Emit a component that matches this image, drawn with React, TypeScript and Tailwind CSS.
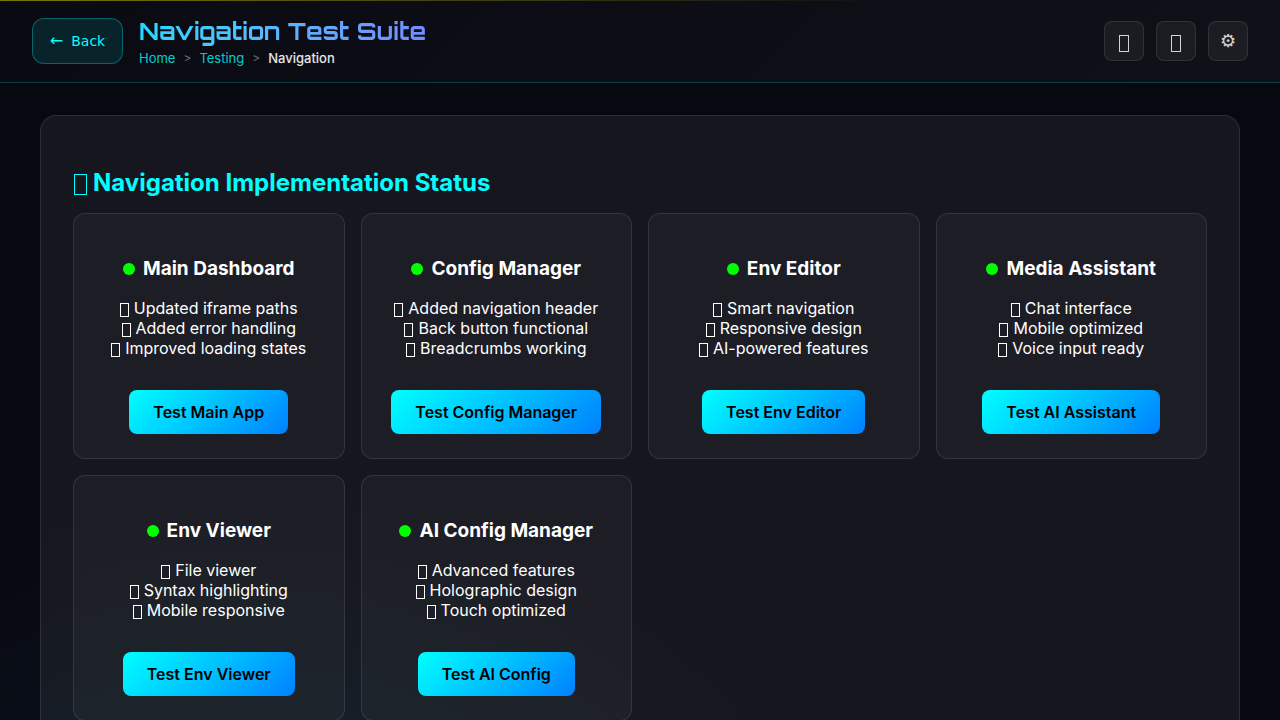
type Status = {
  title: string;
  notes: string[];
  action: string;
};

const statuses: Status[] = [
  {
    title: 'Main Dashboard',
    notes: ['Updated iframe paths', 'Added error handling', 'Improved loading states'],
    action: 'Test Main App',
  },
  {
    title: 'Config Manager',
    notes: ['Added navigation header', 'Back button functional', 'Breadcrumbs working'],
    action: 'Test Config Manager',
  },
  {
    title: 'Env Editor',
    notes: ['Smart navigation', 'Responsive design', 'AI-powered features'],
    action: 'Test Env Editor',
  },
  {
    title: 'Media Assistant',
    notes: ['Chat interface', 'Mobile optimized', 'Voice input ready'],
    action: 'Test AI Assistant',
  },
  {
    title: 'Env Viewer',
    notes: ['File viewer', 'Syntax highlighting', 'Mobile responsive'],
    action: 'Test Env Viewer',
  },
  {
    title: 'AI Config Manager',
    notes: ['Advanced features', 'Holographic design', 'Touch optimized'],
    action: 'Test AI Config',
  },
];

const toolButton =
  'flex size-10 items-center justify-center rounded-lg border border-white/10 bg-white/5 text-lg text-white/80';

function Header() {
  return (
    <header className="relative flex items-center justify-between border-b border-[#00ffff]/20 bg-linear-135 from-[#0a0a12] to-[#101018] px-8 py-4">
      <div className="absolute inset-x-0 top-0 h-px bg-linear-to-r from-[#ffff00]/45 to-transparent to-70%" />
      <div className="flex items-center gap-4">
        <button className="flex h-[46px] w-[91px] items-center justify-center gap-2 rounded-xl border border-[#00ffff]/30 bg-[#00ffff]/10 font-['DejaVu_Sans',sans-serif] text-sm text-[#00ffff]">
          <span className="text-base">←</span>
          Back
        </button>
        <div className="flex flex-col gap-1">
          <h1 className="w-fit bg-linear-to-r from-[#22d8ff] to-[#728cff] bg-clip-text font-['Orbitron','DejaVu_Sans',sans-serif] text-2xl leading-[30px] font-bold text-transparent">
            Navigation Test Suite
          </h1>
          <nav aria-label="Breadcrumb" className="flex items-center gap-2 text-[13px] leading-4">
            <a href="#home" className="text-[#00ffff]/80">Home</a>
            <span className="text-xs leading-4 text-white/40">&gt;</span>
            <a href="#testing" className="text-[#00ffff]/80">Testing</a>
            <span className="text-xs leading-4 text-white/40">&gt;</span>
            <span className="font-medium text-white/90">Navigation</span>
          </nav>
        </div>
      </div>
      <div className="flex gap-3">
        <button aria-label="Home" className={toolButton}>
          <span className="mt-1 h-[17px] w-2.5 border border-current" />
        </button>
        <button aria-label="Refresh" className={toolButton}>
          <span className="mt-1 h-[17px] w-2.5 border border-current" />
        </button>
        <button aria-label="Settings" className={toolButton}>⚙</button>
      </div>
    </header>
  );
}

function StatusCard({ title, notes, action }: Status) {
  return (
    <article className="rounded-xl border border-white/10 bg-white/[0.03] p-6 text-center">
      <h3 className="mt-[19px] flex items-center justify-center gap-2 text-[19px] leading-[23px] font-bold">
        <span className="size-3 rounded-full bg-[#00ff00]" />
        {title}
      </h3>
      <ul className="mt-[18px] leading-5">
        {notes.map((note) => (
          <li key={note} className="flex items-center justify-center gap-[5px]">
            <span className="mt-[3px] h-3.5 w-[9px] border border-current" />
            {note}
          </li>
        ))}
      </ul>
      <button className="mt-8 h-11 rounded-lg bg-linear-135 from-[#00ffff] to-[#0080ff] px-6 font-semibold text-black">
        {action}
      </button>
    </article>
  );
}

export default function App() {
  return (
    <div className="min-h-screen bg-[#080811] bg-[radial-gradient(circle_670px_at_20%_1150px,rgba(0,225,255,0.1),transparent)] font-['Inter',sans-serif] text-base text-white">
      <Header />
      <main className="mx-auto max-w-[1264px] p-8">
        <section className="rounded-2xl border border-white/10 bg-white/[0.06] p-8">
          <h2 className="mt-5 mb-4 flex items-center gap-1.5 text-2xl leading-[29px] font-bold text-[#00ffff]">
            <span className="mt-[3px] ml-px h-[21px] w-[13px] border border-current" />
            Navigation Implementation Status
          </h2>
          <div className="grid grid-cols-[repeat(auto-fit,minmax(250px,1fr))] gap-4">
            {statuses.map((status) => (
              <StatusCard key={status.title} {...status} />
            ))}
          </div>
        </section>
      </main>
    </div>
  );
}
